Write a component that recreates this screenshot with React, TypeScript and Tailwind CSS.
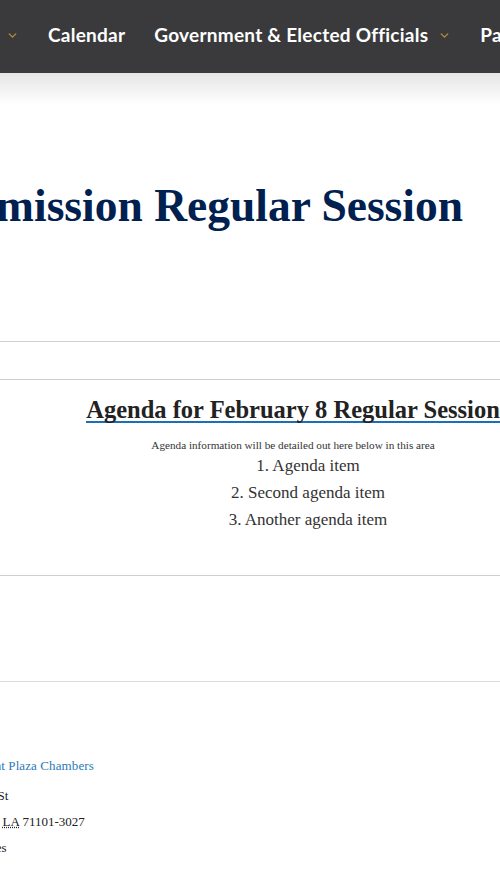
import { ChevronDown } from "lucide-react";

const navFont = { fontFamily: "Lato, 'Open Sans', sans-serif" };

// nav item with optional gold chevron
function NavItem({ label, drop }: { label: string; drop?: boolean }) {
  return (
    <div className="flex items-center shrink-0">
      {label && <span className="text-white text-[19px] font-bold tracking-[0.25px]">{label}</span>}
      {drop && (
        <ChevronDown
          className={`text-[#b08e3a] ${label ? "ml-[10px]" : ""}`}
          size={13}
          strokeWidth={2.6}
        />
      )}
    </div>
  );
}

export default function App() {
  return (
    <div className="w-[500px] min-h-[882px] overflow-hidden bg-white font-['Liberation_Serif',serif]">
      {/* top nav, scrolled so only part is visible */}
      <nav className="h-[73px] bg-[#3a3a3c] flex items-center whitespace-nowrap pl-[6px] pb-[2px] gap-[29px]" style={navFont}>
        <NavItem label="" drop />
        <NavItem label="Calendar" />
        <NavItem label="Government & Elected Officials" drop />
        <NavItem label="Parks & Recreation" drop />
      </nav>
      <div className="h-[32px] bg-gradient-to-b from-[#e5e5e5] to-white" />

      {/* page title */}
      <div className="mt-[76px] flex justify-end pr-[37px] whitespace-nowrap">
        <h1 className="text-[45.5px] leading-[50px] font-bold text-[#00204f]">Commission Regular Session</h1>
      </div>

      <div className="mt-[110px] border-t border-[#cfcfcf]" />
      <div className="mt-[37px] border-t border-[#cfcfcf]" />

      {/* agenda */}
      <div className="w-[586px] text-center mt-[19px]">
        <h2 className="inline-block whitespace-nowrap text-[24.5px] leading-[22px] font-bold text-[#222] border-b-2 border-[#1a6fb5]">
          Agenda for February 8 Regular Session
        </h2>
        <p className="mt-[13px] text-[11.2px] leading-[14px] text-[#333]">
          Agenda information will be detailed out here below in this area
        </p>
        <div className="pl-[30px] text-[17px] leading-[27px] text-[#333]">
          <div>1. Agenda item</div>
          <div>2. Second agenda item</div>
          <div>3. Another agenda item</div>
        </div>
      </div>

      <div className="mt-[42px] border-t border-[#cfcfcf]" />
      <div className="mt-[105px] border-t border-[#dcdcdc]" />

      {/* location */}
      <div className="-ml-[61px] mt-[75px] text-[13px] whitespace-nowrap text-[#222]">
        <div className="leading-[18px] text-[#2a7ab9] tracking-[0.1px]">Government Plaza Chambers</div>
        <div className="mt-[12px] leading-[18px]">505 Travis St</div>
        <div className="mt-[8px] leading-[18px]">
          Shreveport, <abbr className="underline decoration-dotted" title="Louisiana">LA</abbr> 71101-3027
        </div>
        <div className="mt-[8px] leading-[18px]">Parking Fees</div>
      </div>
    </div>
  );
}
